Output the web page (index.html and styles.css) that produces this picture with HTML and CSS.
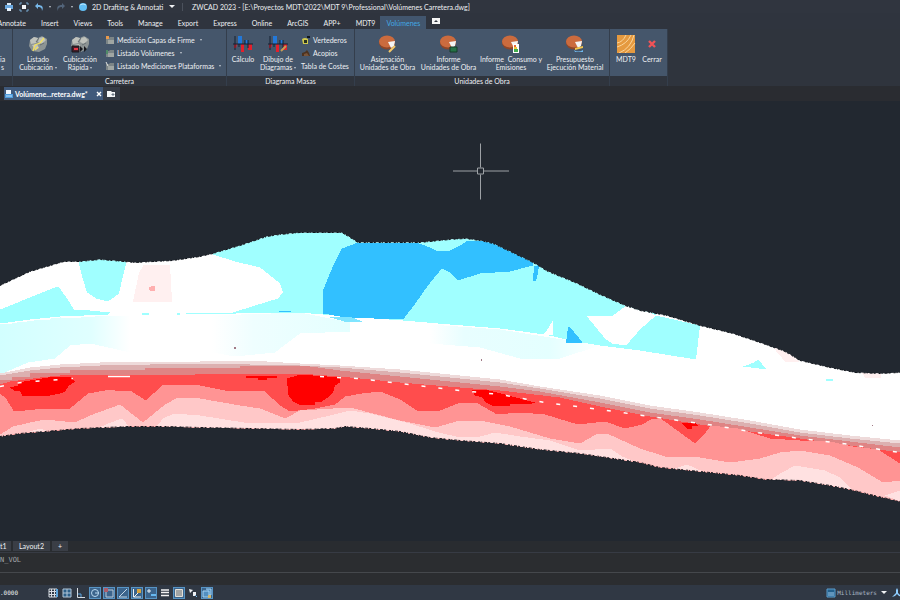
FILE: index.html
```html
<!DOCTYPE html>
<html lang="es">
<head>
<meta charset="utf-8">
<meta name="viewport" content="width=device-width, initial-scale=1">
<title>ZWCAD 2023</title>
<link rel="stylesheet" href="styles.css">
</head>
<body>
<svg class="defs" aria-hidden="true">
  <symbol id="disc" viewBox="0 0 20 18">
    <ellipse cx="9" cy="8" rx="8" ry="6.5" fill="#8e4628"/>
    <ellipse cx="9" cy="6.5" rx="8" ry="6" fill="#cb6b3e"/>
    <path d="M10 7l7-1-1 5-3 2z" fill="#f4f4f4"/>
  </symbol>
  <symbol id="bars" viewBox="0 0 20 18">
    <path d="M5 1h4v8H5zM12 5h3v4h-3z" fill="#2378d8"/>
    <path d="M1 9h3l-1 4H1zM8 9h3v8H8zM15 9h4v6h-4z" fill="#e3202c"/>
    <path d="M2 1v14M0 9h20M12 5v4M6 9v3M15 5v8" stroke="#152032" fill="none"/>
  </symbol>
  <symbol id="folder" viewBox="0 0 10 10">
    <path d="M1 3h3l1-1h4v7H1z" fill="#7c8587"/>
    <path d="M3 5h6v4H3z" fill="#a0a6a3"/>
  </symbol>
  <symbol id="rocks" viewBox="0 0 20 18">
    <path d="M2 5l4-3 4 1 4-2 5 3v5l-2 5-6 3-7-1-3-5z" fill="#8d9494"/>
    <path d="M2 5l4-3 4 1-2 5-5 1zM11 3l4-1 3 3-4 4-4-2zM4 10l5-1 2 4-4 2z" fill="#bfc2bc"/>
    <path d="M8 7l3-4M12 10l4-2" stroke="#676f73"/>
  </symbol>
</svg>

<header>
  <div class="titlebar">
    <div class="quick">
      <button aria-label="Imprimir"><svg viewBox="0 0 10 10"><path d="M3 1h4v2H3z" fill="#dce9f5"/><path d="M1 3h8v4H1z" fill="#6aa7de"/><path d="M3 6h4v3H3z" fill="#eaf4ff"/></svg></button>
      <button aria-label="Vista previa"><svg viewBox="0 0 10 10"><path d="M1 3V1h2M7 1h2v2M9 7v2H7M3 9H1V7" fill="none" stroke="#77a8cf"/><path d="M3 3h4v4H3z" fill="#f2f5f8"/></svg></button>
      <button aria-label="Deshacer"><svg viewBox="0 0 10 10"><path d="M4 1L1 4l3 3V5c3 0 4 1 4 4 2-4 0-6-4-6z" fill="#77b7e8"/></svg></button>
      <span class="arrow"></span>
      <button aria-label="Rehacer"><svg viewBox="0 0 10 10"><path d="M6 1l3 3-3 3V5c-3 0-4 1-4 4-2-4 0-6 4-6z" fill="#52647a"/></svg></button>
      <span class="arrow"></span>
      <svg class="ball" viewBox="0 0 10 10"><circle cx="5" cy="5" r="4" fill="#62bff5"/><path d="M2 3q3-2 6 0" stroke="#b5e3fd" fill="none"/></svg>
    </div>
    <label class="workspace"><select aria-label="Espacio de trabajo"><option>2D Drafting &amp; Annotati</option></select><span class="caret"></span></label>
    <span class="title">ZWCAD 2023 - [E:\Proyectos MDT\2022\MDT 9\Professional\Volúmenes Carretera.dwg]</span>
  </div>
  <nav class="tabs">
    <a class="first" href="#">Annotate</a><a href="#">Insert</a><a href="#">Views</a><a href="#">Tools</a><a href="#">Manage</a><a href="#">Export</a><a href="#">Express</a><a href="#">Online</a><a href="#">ArcGIS</a><a href="#">APP+</a><a href="#">MDT9</a><a class="active" href="#">Volúmenes</a>
    <button class="fold" aria-label="Contraer cinta"><svg viewBox="0 0 8 6"><path d="M0 0h8v6H0z" fill="#f5f5f5"/><path d="M2 4l2-2 2 2z" fill="#30353e"/></svg></button>
  </nav>
  <div class="ribbon">
    <section class="panel edge"><div class="body"><button class="big"><span>ia<br>s</span></button></div><h2>&nbsp;</h2></section>
    <section class="panel carretera">
      <div class="body">
        <button class="big"><svg viewBox="0 0 20 18"><use href="#rocks"/><path d="M5 16l2-6 5-2 4-5M7 15l3-3" stroke="#f3e05f" stroke-width="1.3" fill="none"/></svg><span>Listado<br>Cubicación <i class="arrow"></i></span></button>
        <button class="big"><svg viewBox="0 0 20 18"><use href="#rocks"/><path d="M2 11h7v6H2z" fill="#461d27" stroke="#14191f"/><path d="M4 13h4v2H4z" fill="#e73846"/><path d="M10 11l3 3-3 3zM14 11l3 3-3 3z" fill="#17191e"/></svg><span>Cubicación<br>Rápida <i class="arrow"></i></span></button>
        <div class="list">
          <button><svg viewBox="0 0 10 10"><use href="#folder"/><path d="M1 1h3v3H1z" fill="#e99a4c"/></svg>Medición Capas de Firme <i class="arrow"></i></button>
          <button><svg viewBox="0 0 10 10"><use href="#folder"/><path d="M1 2h2v4H1z" fill="#4f8b67"/></svg>Listado Volúmenes <i class="arrow"></i></button>
          <button><svg viewBox="0 0 10 10"><use href="#folder"/><path d="M1 1l2 4" stroke="#e3e5e3"/></svg>Listado Mediciones Plataformas <i class="arrow"></i></button>
        </div>
      </div>
      <h2>Carretera</h2>
    </section>
    <section class="panel masas">
      <div class="body">
        <button class="big"><svg viewBox="0 0 20 18"><use href="#bars"/></svg><span>Cálculo</span></button>
        <button class="big"><svg viewBox="0 0 20 18"><use href="#bars"/><path d="M13 16l5-5" stroke="#c89c55" stroke-width="2"/></svg><span>Dibujo de<br>Diagramas <i class="arrow"></i></span></button>
        <div class="list">
          <button><svg viewBox="0 0 10 10"><path d="M1 4q3-2 6 0v5H2z" fill="#d0c94d"/><path d="M3 5h3v3H3z" fill="#28321f"/><path d="M6 1h3v2H6z" fill="#11171d"/></svg>Vertederos</button>
          <button><svg viewBox="0 0 10 10"><path d="M1 8V5l3-1 2-2 2 3 1 3z" fill="#4c321f"/><path d="M3 6l3-1 2 3H3z" fill="#785338"/></svg>Acopios</button>
          <button>Tabla de Costes</button>
        </div>
      </div>
      <h2>Diagrama Masas</h2>
    </section>
    <section class="panel unidades">
      <div class="body">
        <button class="big"><svg viewBox="0 0 20 18"><use href="#disc"/><path d="M11 17l6-6" stroke="#f5c968" stroke-width="2"/></svg><span>Asignación<br>Unidades de Obra</span></button>
        <button class="big"><svg viewBox="0 0 20 18"><use href="#disc"/><path d="M11 12h7v5h-7z" fill="#247246" stroke="#173d2b"/></svg><span>Informe<br>Unidades de Obra</span></button>
        <button class="big"><svg viewBox="0 0 20 18"><use href="#disc"/><path d="M12 9h6v9h-6z" fill="#fff"/><path d="M13 10h2v2h-2z" fill="#e36b3c"/><path d="M13 12h3v2h-3z" fill="#f0c83c"/><path d="M13 14h4v3h-4z" fill="#3fad4d"/></svg><span>Informe &nbsp;Consumo y<br>Emisiones</span></button>
        <button class="big"><svg viewBox="0 0 20 18"><use href="#disc"/><path d="M10 13l8-2v2l-8 2z" fill="#f4c64d"/><path d="M9 15q4 3 9 0v2h-8z" fill="#70b9ef"/></svg><span>Presupuesto<br>Ejecución Material</span></button>
      </div>
      <h2>Unidades de Obra</h2>
    </section>
    <section class="panel mdt">
      <div class="body">
        <button class="big"><svg viewBox="0 0 18 18"><path d="M0 0h18v18H0z" fill="#e59a40"/><path d="M0 12Q10 9 14 0M2 18Q14 13 17 0M0 8Q6 7 9 0M8 18q6-4 10-10" stroke="#fbd59a" fill="none"/></svg><span>MDT9</span></button>
        <button class="big"><svg viewBox="0 0 18 18"><path d="M6 6l6 6M12 6l-6 6" stroke="#f15357" stroke-width="2.4"/></svg><span>Cerrar</span></button>
      </div>
      <h2>&nbsp;</h2>
    </section>
  </div>
  <div class="docs">
    <a class="doc" href="#"><svg viewBox="0 0 10 10"><path d="M2 1h5v5H2z" fill="#eef6ff"/><path d="M1 5h8v4H1z" fill="#4e9cdd"/><path d="M2 7h6" stroke="#bfe0fa"/></svg>Volúmene...retera.dwg*<svg class="x" viewBox="0 0 8 8"><path d="M2 2l4 4M6 2L2 6" stroke="#fff" stroke-width="1.4"/></svg></a>
    <button class="new" aria-label="Nuevo dibujo"><svg viewBox="0 0 10 8"><path d="M1 1h4l1 1h3v5H1z" fill="#f5f7f8"/><path d="M7 3v3M5.500 4.500h3" stroke="#6b7785"/></svg></button>
  </div>
</header>

<main>
<svg class="drawing" viewBox="0 100 900 441" preserveAspectRatio="xMidYMid slice" role="img" aria-label="Mapa de volúmenes de la carretera">
  <defs>
    <linearGradient id="paleLeft"><stop offset="0" stop-color="#d2ffff"/><stop offset=".7" stop-color="#e0ffff"/><stop offset="1" stop-color="#fff"/></linearGradient>
    <linearGradient id="paleMid"><stop offset="0" stop-color="#fff"/><stop offset=".3" stop-color="#effeff"/><stop offset="1" stop-color="#e4ffff"/></linearGradient>
    <linearGradient id="paleRight"><stop offset="0" stop-color="#fff"/><stop offset=".2" stop-color="#e8feff"/><stop offset=".7" stop-color="#e4ffff"/><stop offset="1" stop-color="#fff"/></linearGradient>
    <path id="top" d="M0 285L30 271 64 261 80 261 100 259 112 260 135 262 173 260 200 256 213 253 240 245 267 236 280 234 300 232H342L358 242H420L450 239 465 238 480 240 493 243 510 251 533 262 548 271 575 282 600 294 625 305 640 310 667 315 700 325 733 333 760 342 785 351 800 360 830 367 855 372 880 373 900 372"/>
    <path id="bottom" d="M0 436L20 433 45 431 80 428 130 426H165L200 427 300 429 335 428 345 426 370 428 400 431 430 437 460 440 500 443 540 449 580 453 620 459 640 462 660 467 700 471 740 475 765 479 800 480 830 485 850 489 870 494 900 501"/>
    <clipPath id="terrain"><path d="M0 285L30 271 64 261 80 261 100 259 112 260 135 262 173 260 200 256 213 253 240 245 267 236 280 234 300 232H342L358 242H420L450 239 465 238 480 240 493 243 510 251 533 262 548 271 575 282 600 294 625 305 640 310 667 315 700 325 733 333 760 342 785 351 800 360 830 367 855 372 880 373 900 372V501L870 494 850 489 830 485 800 480 765 479 740 475 700 471 660 467 640 462 620 459 580 453 540 449 500 443 460 440 430 437 400 431 370 428 345 426 335 428 300 429 200 427 165 426H130L80 428 45 431 20 433 0 436Z"/></clipPath>
  </defs>
  <g clip-path="url(#terrain)" shape-rendering="crispEdges">
    <path d="M0 200H900V520H0z" fill="#fff"/>
    <!-- fill volumes -->
    <path d="M0 324L60 317 130 315V352L104 346 90 343 70 345 55 358 28 362 0 374z" fill="url(#paleLeft)"/>
    <path d="M212 315L300 312 350 322V331L300 333 288 342 275 352 235 356 212 352z" fill="url(#paleMid)"/>
    <path d="M430 324L500 329 600 345 560 358 520 358 480 347 430 343z" fill="url(#paleRight)"/>
    <g fill="#a0ffff">
      <path d="M0 309L20 301 57 286 60 288 67 298 74 309 90 310 110 312 108 314 60 316 30 319 0 323zM77 255H126V264L123 275 119 293 108 301 96 298 87 292 82 276z"/>
      <path d="M213 253V220H627L656 315 700 325 696 359 640 350 600 345 575 341 545 334 500 328 450 324 403 320 345 316 300 312H233L255 305 278 298 283 292 280 283 260 267 235 261 213 254z"/>
      <path d="M142 312h7v2h-7zM177 312h3v2h-3zM186 312h50v1h-50zM743 366l11-4 4-3 9 10zM826 378h7v2h-7z"/>
    </g>
    <path d="M587 316L600 315 613 315 629 303 656 315 640 329 626 345 612 343 605 338zM543 334l3-3 7-11v14z" fill="#fff"/>
    <path d="M358 242L342 248 335 261 329 275 323 290V313L345 317 403 319 414 305 425 289 436 275 442 268 450 272 458 280 480 273 510 271 533 265 533 262V240H468L460 245 450 250 438 251 430 247 419 243zM534 266l5-2-1 9-2 7h-3zM568 326l2 1 7 8 6 8-17-1z" fill="#32c0ff"/>
    <path d="M279 310h12v1h-12z" fill="#32c0ff"/>
    <path d="M330 317l20-1 12 5h-18z" fill="#80e5ff"/>
    <path d="M3 323h9M18 321h9M35 319h15M61 317h20" stroke="#fff" stroke-width="1.500"/>
    <path d="M139 272L144 264H170L171 282 172 301H133zM773 347H786L800 362 785 361zM860 370H881V377H865z" fill="#fff0f0"/>
    <path d="M149 287l3-2h3v5l-4 1-2-2z" fill="#ffafaf"/>
    <path d="M234 346h2v2h-2zM481 358h1v2h-1zM872 424h1v1h-1z" fill="#a07a86"/>
    <!-- slope transition -->
    <path d="M0 373L30 367 60 364 100 362 200 361 250 360 300 363 340 365 400 369 460 375 500 379 540 386 600 395 650 405 700 412 750 420 800 429 850 435 900 440V520H0z" fill="#eedada"/>
    <path d="M0 375L30 370 60 367 100 365 200 363 300 365 340 367 400 372 460 378 500 382 540 388 600 398 650 408 700 415 750 423 800 432 850 438 900 443V520H0z" fill="#dcb0b0"/>
    <path d="M0 379H12V376H30V372H70V369H145V367H240V365H303L340 370 400 376 460 382 500 386 540 391 600 402 650 412 700 419 750 427 800 435 850 441 900 447V520H0z" fill="#df8484"/>
    <!-- cut volumes -->
    <path d="M0 384L10 381 40 377 70 374 100 374H195L235 373 300 373 340 376 400 382 460 387 500 390 560 397 600 406 650 416 700 424 750 431 800 438 850 445 900 452V520H0z" fill="#ff4d4d"/>
    <path d="M0 393L6 398 14 411 35 409 70 408 88 393 110 389 120 391 130 390 146 400 163 384 195 384 225 390 265 391 280 405 290 411 315 408 335 404 345 396 362 393 380 391 400 399 417 410 440 410 460 402 478 403 497 414 520 412 545 414 578 424 605 421 625 428 642 424 653 418 662 419 695 443 704 434 711 425 738 428 770 438 800 440 830 441 853 446 878 449 900 463V520H0z" fill="#ff9494"/>
    <path d="M0 434L13 426 30 422 45 419 75 422 90 415 120 404 143 422 165 404 178 397 200 398 240 405 260 408 285 418 300 410 350 407 400 420 435 427 460 420 480 420 510 426 550 438 580 443 596 434 607 433 640 448 665 456 700 457 730 462 760 458 780 452 800 450 830 455 858 467 883 482 900 480V520H0z" fill="#ffc8c8"/>
    <path d="M30 431L40 428 52 432zM95 429L108 423 122 418 130 427zM155 428L163 418 174 413 200 415 250 423 300 422 330 415 350 410 370 413 410 423 435 431 460 437 480 436 495 432 520 436 550 440 580 450 610 448 622 456 640 463 540 451 430 438 345 428 250 430zM675 468L687 464 705 472zM770 480L780 473 795 465 825 470 840 477 852 489zM885 495L900 490V501z" fill="#ffe1e1"/>
    <path d="M10 387L18 385V382L48 377 70 376 75 381 69 385 65 391 60 393 50 395 42 396 22 395 20 391 14 390zM246 375H277V377H267V379H258V377H246zM287 378L300 374 340 377V382L335 385 333 392 329 396 322 401 315 402V404H299L293 401 288 394zM471 389H485L505 394 535 402 528 404 510 403V405H492L486 402 482 397 475 395zM681 422H695L698 425 692 426V428H687z" fill="#f00"/>
  </g>
  <g stroke="#fff" stroke-width="1.500" fill="none">
    <path d="M0 386L14 383 30 381 48 380 73 378" stroke-dasharray="4 14"/>
    <path d="M320 376L357 378 400 383 450 389 500 394 545 402 600 409 650 416 715 425 750 431 800 438 850 444 880 449 900 452" stroke-dasharray="4 13"/>
    <path d="M108 376h22"/>
  </g>
  <g fill="none" stroke="#11161c" stroke-dasharray="2 1 1 2 3 1 2 3">
    <use href="#top"/><use href="#bottom"/>
  </g>
  <path class="cross" d="M453 170.500H477M484 170.500H509M480.500 143V167M480.500 174V199M477.500 167.500h6v6h-6z"/>
</svg>
</main>

<footer>
  <nav class="layouts"><a class="cut" href="#">t1</a><a href="#">Layout2</a><button aria-label="Nueva presentación">+</button></nav>
  <div class="command">
    <output>N_VOL</output>
    <input type="text" aria-label="Línea de comandos">
  </div>
  <div class="status">
    <span class="coords">.0000</span>
    <div class="modes">
      <button aria-label="Forzar cursor"><svg viewBox="0 0 12 12"><path d="M2 2h8v8H2zM2 4.500h8M2 7.500h8M4.500 2v8M7.500 2v8" fill="none" stroke="#d7dce2"/><path d="M9 2h2v8H9" fill="#5da5dd"/></svg></button>
      <button aria-label="Rejilla"><svg viewBox="0 0 12 12"><path d="M2 2h8v8H2zM2 6h8M6 2v8" fill="#2c5f88" stroke="#b1c6d8"/></svg></button>
      <button aria-label="Orto"><svg viewBox="0 0 12 12"><path d="M2.500 1v9.500H10" fill="none" stroke="#d7dce2"/><path d="M3 7h3v3" fill="none" stroke="#5aa4e0"/></svg></button>
      <button class="on" aria-label="Polar"><svg viewBox="0 0 12 12"><circle cx="6" cy="6" r="3.500" fill="none" stroke="#b9d8f0"/><path d="M6 6h4" stroke="#b9d8f0"/></svg></button>
      <button class="on" aria-label="Referencia a objetos"><svg viewBox="0 0 12 12"><path d="M3 3h7v7H3z" fill="none" stroke="#b9c9d8"/><path d="M1 1h4v4H1z" fill="#a85c6b"/></svg></button>
      <button class="on" aria-label="Rastreo"><svg viewBox="0 0 12 12"><path d="M10 2L2 10h8" fill="none" stroke="#c5d8e8"/></svg></button>
      <button class="on" aria-label="UCS dinámico"><svg viewBox="0 0 12 12"><path d="M2.500 2v8H10M3 10l5-5" fill="none" stroke="#eef3f7"/><path d="M6 2h4v4H6z" fill="#d5a33f"/></svg></button>
      <button class="on" aria-label="Entrada dinámica"><svg viewBox="0 0 12 12"><path d="M4 2v4M2 4h4" stroke="#eaf2f8"/><path d="M6 7h5v2H6z" fill="#67b8ef"/></svg></button>
      <button aria-label="Grosor de línea"><svg viewBox="0 0 12 12"><path d="M2 3h8M2 5.500h8M2 8.500h8" stroke="#f2f2f2" stroke-width="1.500"/></svg></button>
      <button class="on" aria-label="Transparencia"><svg viewBox="0 0 12 12"><path d="M2.500 2.500h7v7h-7z" fill="#a2a5a5" stroke="#e3dfd7"/></svg></button>
      <button aria-label="Ciclo de selección"><svg viewBox="0 0 12 12"><path d="M2 2l4 1-3 3zM6 5h3v4H6z" fill="#eef1f4"/><path d="M8 8l2 2" stroke="#76b6e8"/></svg></button>
      <button class="on" aria-label="Modelo"><svg viewBox="0 0 12 12"><path d="M2 4h6v6H2zM5 2h5v6H8" fill="#528fc0" stroke="#a5d4f5"/><path d="M7 8h3v3H7z" fill="#ceb56e"/></svg></button>
    </div>
    <button class="units"><svg viewBox="0 0 10 10"><path d="M1 1h8v8H1z" fill="#23608c" stroke="#5c9dcc"/><path d="M3 4v4M5 4v4M7 4v4" stroke="#9fcaec"/></svg>Millimeters<span class="caret"></span></button>
    <svg class="person" viewBox="0 0 10 12"><path d="M5 1l1 2v3l4 4-3-1-2-2-2 2-3 1 4-4V3z" fill="#8fceff"/></svg>
  </div>
</footer>
</body>
</html>
```
FILE: styles.css
```css
* { box-sizing: border-box; }

body {
  margin: 0;
  height: 100vh;
  display: flex;
  flex-direction: column;
  overflow: hidden;
  background: #222830;
  color: #eef0f3;
  font: 7px/8px Lato, "Open Sans", sans-serif;
}

button, select, input {
  font: inherit;
  color: inherit;
  background: none;
  border: 0;
  padding: 0;
  margin: 0;
  appearance: none;
}

a { color: inherit; text-decoration: none; }
svg { display: block; flex: none; }
.defs { position: absolute; width: 0; height: 0; }

.arrow, .caret {
  display: inline-block;
  flex: none;
  border: 1px solid transparent;
  border-top: 2px solid #c3cad2;
  border-bottom: 0;
  vertical-align: middle;
}
.caret { border-width: 3px 3px 0; border-top-color: #f0f2f4; }

.titlebar {
  display: flex;
  align-items: center;
  height: 13px;
  background: #30353f;
  white-space: nowrap;
}
.quick { display: flex; align-items: center; gap: 5px; padding-left: 4px; }
.quick svg { width: 10px; height: 10px; }
.workspace {
  display: flex;
  align-items: center;
  width: 95px;
  padding-left: 4px;
  border-right: 1px solid #4b515c;
}
.workspace select { width: 77px; }
.title { padding-left: 9px; }

.tabs {
  display: flex;
  align-items: stretch;
  gap: 15px;
  height: 16px;
  line-height: 20px;
  background: #2f343e;
}
.tabs a { flex: none; }
.tabs .first { width: 26px; display: flex; justify-content: flex-end; }
.tabs .active {
  margin: 3px 0 0 -10px;
  padding: 0 6px;
  line-height: 14px;
  background: #42566e;
  color: #43a8e4;
}
.fold { align-self: center; margin-left: -9px; }
.fold svg { width: 8px; height: 6px; }

.ribbon { display: flex; background: #2f343d; white-space: nowrap; overflow: hidden; }
.panel { flex: none; border-right: 1px solid #343e4c; }
.panel h2 {
  margin: 0;
  height: 10px;
  font-size: 7px;
  font-weight: 400;
  line-height: 10px;
  text-align: center;
}
.body { display: flex; align-items: flex-start; height: 47px; background: #45566b; }
.big {
  display: flex;
  flex-direction: column;
  align-items: center;
  flex: none;
  padding-top: 6px;
  gap: 2px;
  line-height: 8px;
}
.big svg { width: 20px; height: 18px; }
.list { display: flex; flex-direction: column; gap: 1px; padding-top: 5px; }
.list button { display: flex; align-items: center; gap: 2px; height: 12px; }
.list svg { width: 10px; height: 10px; }
.list .arrow { margin-left: 3px; }

.edge { width: 13px; }
.edge .big { width: 12px; padding-top: 26px; align-items: flex-start; }
.carretera { width: 214px; }
.carretera .big { width: 42px; }
.carretera .big:first-child { margin-left: 4px; }
.carretera .list { margin-left: 4px; }
.masas { width: 128px; }
.masas .big { width: 32px; }
.masas .big + .big { width: 38px; }
.masas .list { margin-left: 4px; }
.unidades { width: 255px; }
.unidades .big { width: 64px; }
.unidades .big:first-child, .unidades .big:nth-child(2) { width: 61px; }
.unidades .big:first-child { margin-left: 2px; }
.mdt { width: 58px; }
.mdt .big { width: 26px; }
.mdt .big:first-child { margin-left: 3px; }

.docs { display: flex; height: 15px; background: #2a2c31; }
.doc {
  display: flex;
  align-items: center;
  gap: 1px;
  width: 99px;
  height: 13px;
  margin: 1px 0 0 4px;
  background: #40597b;
  color: #fff;
  font-weight: 700;
  white-space: nowrap;
}
.doc svg { width: 10px; height: 10px; }
.doc .x { width: 8px; height: 8px; margin-left: auto; }
.new { width: 17px; height: 13px; margin-top: 1px; padding-left: 3px; background: #353b45; }
.new svg { width: 10px; height: 8px; }

main { flex: 1; min-height: 0; }
.drawing { width: 100%; height: 100%; }
.cross { fill: none; stroke: #9da1a5; stroke-width: 1; }

.layouts { display: flex; gap: 2px; height: 11px; background: #292c30; line-height: 11px; }
.layouts a, .layouts button { height: 10px; padding: 0 6px; background: #3a3e46; }
.layouts .cut { width: 11px; padding: 0; }

.command { height: 33px; border-top: 1px solid #373b44; background: #2b2d30; }
.command output {
  display: block;
  height: 20px;
  padding-top: 3px;
  border-bottom: 1px solid #45484c;
  color: #a2a5a9;
  font-family: "DejaVu Sans Mono", monospace;
}
.command input { display: block; width: 100%; height: 12px; }

.status {
  display: flex;
  align-items: center;
  height: 15px;
  background: #303844;
  font-size: 6px;
  font-family: "DejaVu Sans Mono", monospace;
}
.coords { width: 47px; }
.modes { display: flex; gap: 2px; }
.modes button { width: 12px; height: 12px; }
.modes svg { width: 12px; height: 12px; }
.modes .on { background: #3b648c; box-shadow: inset 0 0 0 1px #5794c4; }
.units { display: flex; align-items: center; gap: 1px; margin-left: auto; color: #a8b6c3; }
.units svg { width: 10px; height: 10px; }
.units .caret { margin-left: 3px; }
.person { width: 10px; height: 12px; margin: 0 -2px 0 5px; }
```
